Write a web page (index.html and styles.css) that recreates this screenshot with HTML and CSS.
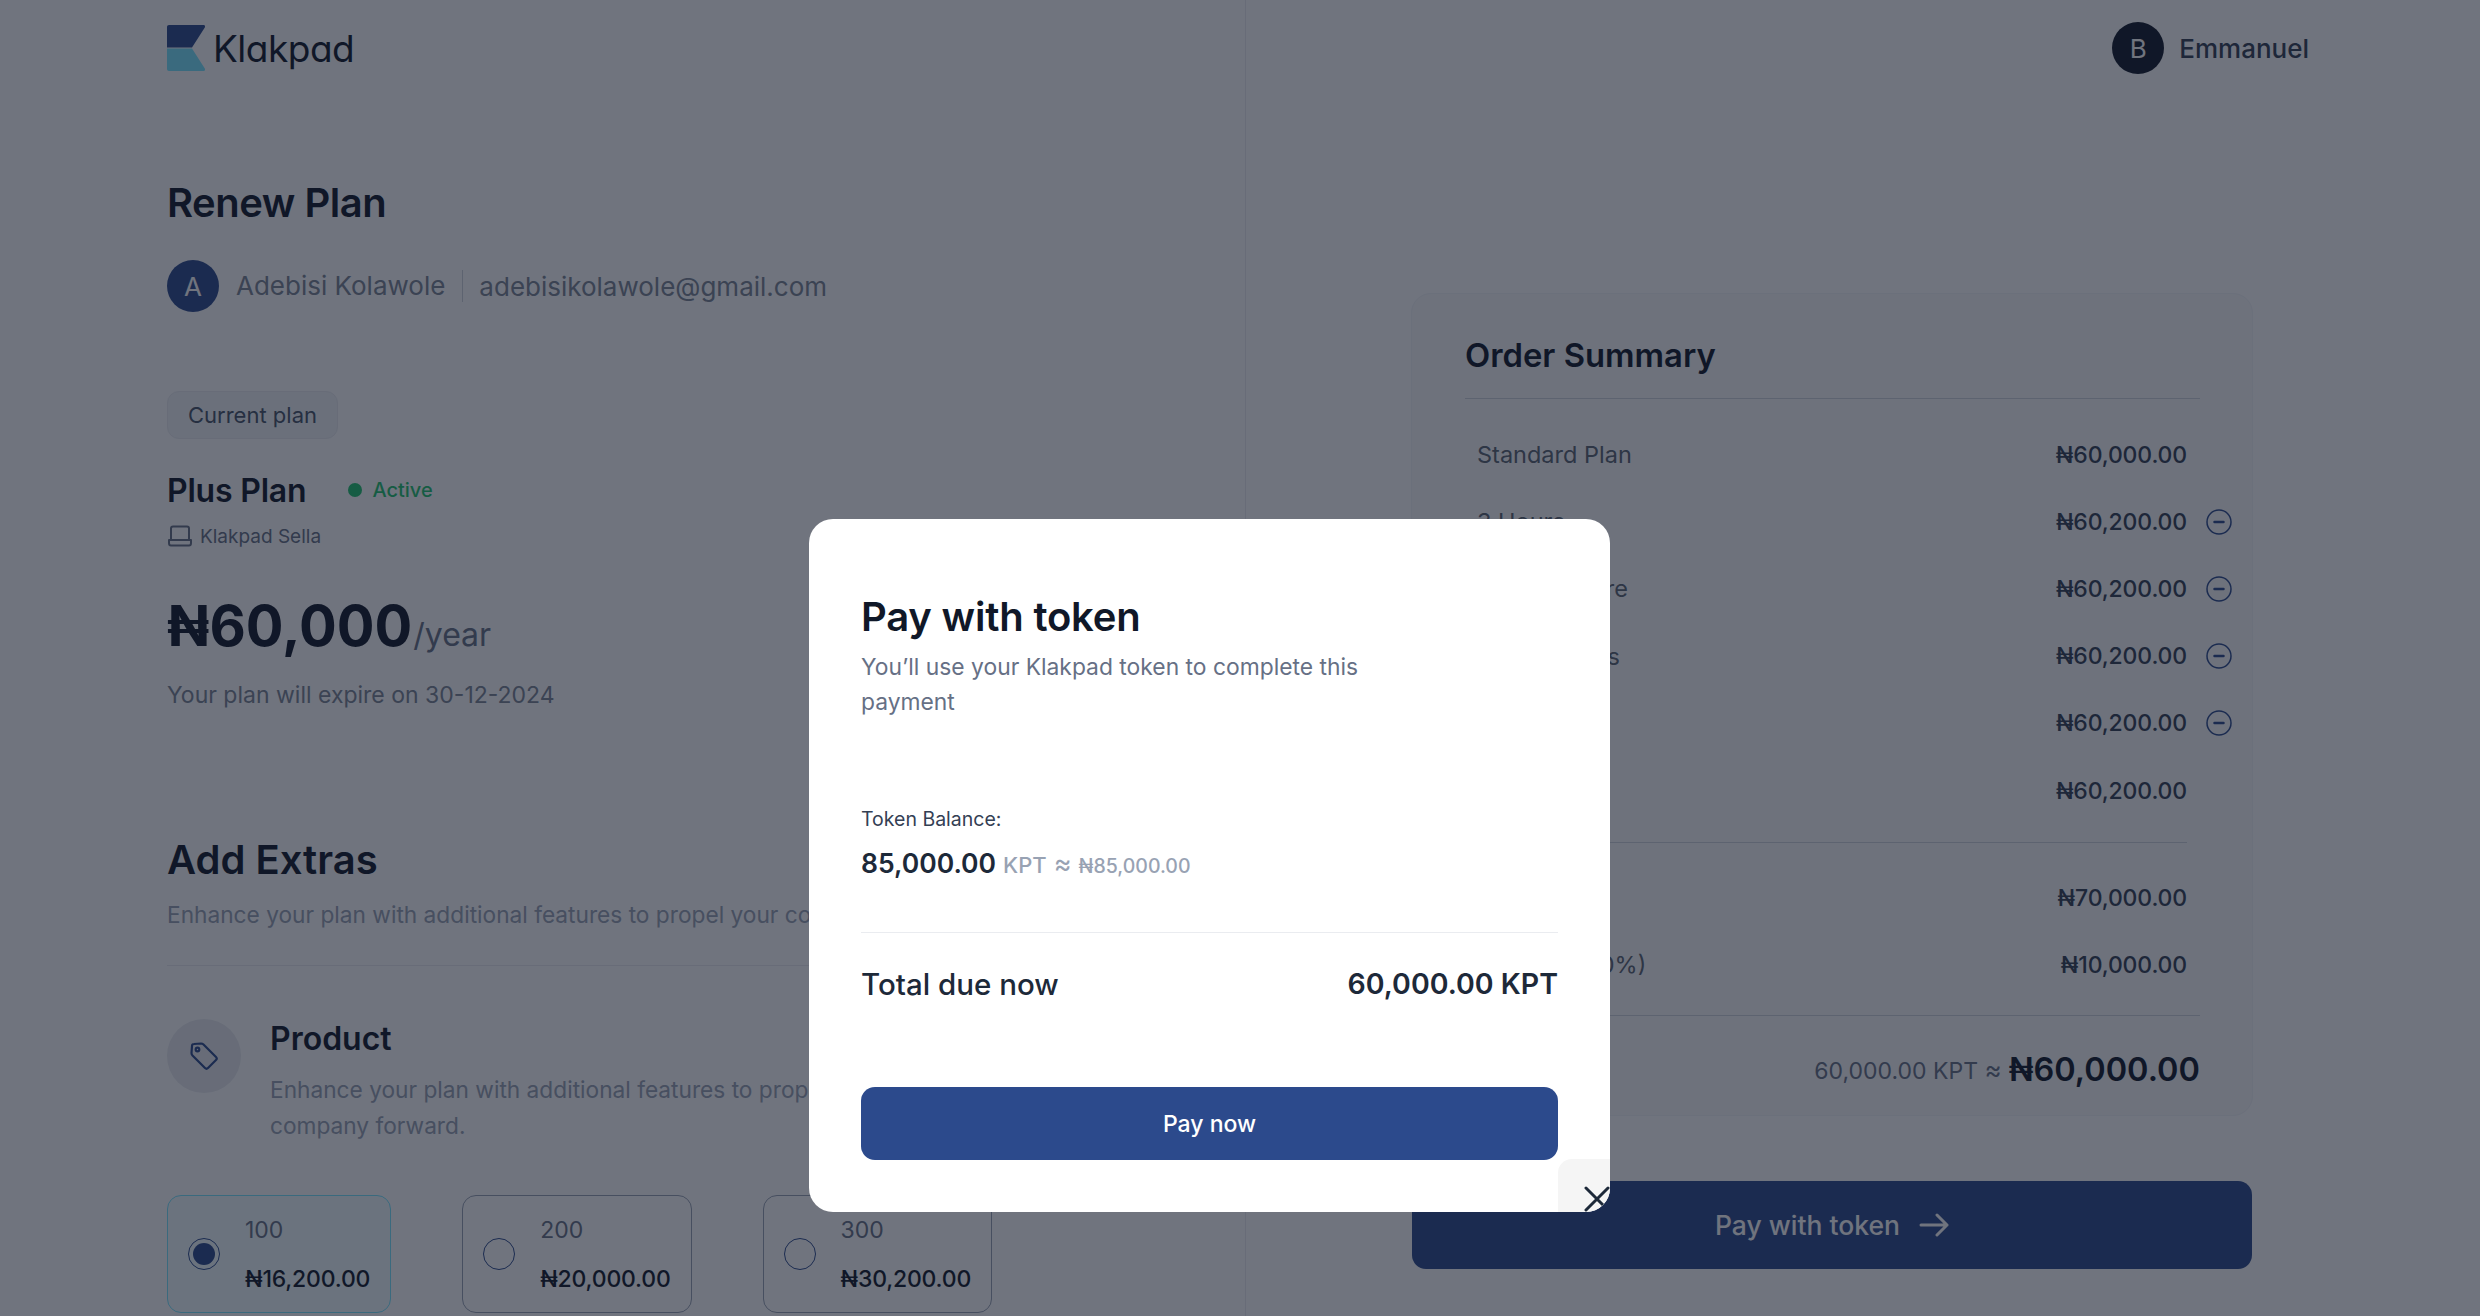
FILE: index.html
```html
<!DOCTYPE html>
<html lang="en">
<head>
  <meta charset="UTF-8">
  <meta name="viewport" content="width=device-width, initial-scale=1.0">
  <title>Renew Plan - Klakpad</title>
  <link rel="stylesheet" href="styles.css">
</head>
<body>
  <div class="page">
    <main class="left">
      <div class="logo">
        <svg class="logo-mark" width="38" height="46" viewBox="0 0 38 46">
          <path d="M2 0H36.5C38 0 38.6 1.2 37.8 2.4L25 22.6H0V2C0 .8 .8 0 2 0Z" fill="#2c4a8c"/>
          <path d="M0 23.4H25L37.8 43.6C38.6 44.8 38 46 36.5 46H2C.8 46 0 45.2 0 44Z" fill="#79e6ff"/>
        </svg>
        <span class="logo-text">Klakpad</span>
      </div>

      <h1 class="title">Renew Plan</h1>
      <div class="customer">
        <span class="avatar avatar-blue">A</span>
        <span class="customer-name">Adebisi Kolawole</span>
        <span class="customer-email">adebisikolawole@gmail.com</span>
      </div>

      <span class="chip">Current plan</span>
      <div class="plan-row">
        <h2 class="plan-name">Plus Plan</h2>
        <span class="status"><i class="status-dot"></i>Active</span>
      </div>
      <div class="plan-product">
        <svg width="26" height="22" viewBox="0 0 26 22" fill="none" stroke="#667085" stroke-width="2" stroke-linejoin="round">
          <path d="M4 15V3.5C4 2.2 4.8 1.5 6 1.5H20C21.2 1.5 22 2.2 22 3.5V15"/>
          <path d="M2 15H24V18C24 19.4 23.2 20.500 22 20.500H4C2.800 20.500 2 19.400 2 18Z"/>
        </svg>
        Klakpad Sella
      </div>
      <div class="price"><span class="price-value">₦60,000</span><span class="price-unit">/year</span></div>
      <p class="expiry">Your plan will expire on 30-12-2024</p>

      <section class="extras">
        <h2 class="extras-title">Add Extras</h2>
        <p class="extras-sub">Enhance your plan with additional features to propel your company forward.</p>

        <div class="extra">
          <span class="extra-icon">
            <svg width="30" height="30" viewBox="0 0 30 30" fill="none" stroke="#2c4a8c" stroke-width="2.200" stroke-linejoin="round">
              <path d="M3 5Q3 3 5 3L12 2.500Q13.500 2.500 14.500 3.500L27 16Q28.500 17.500 27 19L19 27Q17.500 28.500 16 27L3.500 14.500Q2.500 13.500 2.500 12Z"/>
              <circle cx="8.500" cy="8.500" r="1.800"/>
            </svg>
          </span>
          <div>
            <h3 class="extra-name">Product</h3>
            <p class="extra-desc">Enhance your plan with additional features to propel your<br>company forward.</p>
          </div>
        </div>

        <div class="options">
          <div class="option option-selected">
            <span class="radio radio-on"></span>
            <div><div class="option-qty">100</div><div class="option-price">₦16,200.00</div></div>
          </div>
          <div class="option">
            <span class="radio"></span>
            <div><div class="option-qty">200</div><div class="option-price">₦20,000.00</div></div>
          </div>
          <div class="option">
            <span class="radio"></span>
            <div><div class="option-qty">300</div><div class="option-price">₦30,200.00</div></div>
          </div>
        </div>
      </section>
    </main>

    <aside class="right">
      <div class="account">
        <span class="avatar avatar-dark">B</span>
        <span class="account-name">Emmanuel</span>
      </div>

      <div class="summary">
        <h2 class="summary-title">Order Summary</h2>
        <div class="rows">
          <div class="row"><span class="row-label">Standard Plan</span><span class="row-amount">₦60,000.00</span><span class="row-action"></span></div>
          <div class="row"><span class="row-label">3 Hours</span><span class="row-amount">₦60,200.00</span><svg class="row-action" viewBox="0 0 26 26"><circle cx="13" cy="13" r="12"/><path d="M8.500 13H17.500"/></svg></div>
          <div class="row"><span class="row-label">Custom Store</span><span class="row-amount">₦60,200.00</span><svg class="row-action" viewBox="0 0 26 26"><circle cx="13" cy="13" r="12"/><path d="M8.500 13H17.500"/></svg></div>
          <div class="row"><span class="row-label">Extra Credits</span><span class="row-amount">₦60,200.00</span><svg class="row-action" viewBox="0 0 26 26"><circle cx="13" cy="13" r="12"/><path d="M8.500 13H17.500"/></svg></div>
          <div class="row"><span class="row-label">Staff</span><span class="row-amount">₦60,200.00</span><svg class="row-action" viewBox="0 0 26 26"><circle cx="13" cy="13" r="12"/><path d="M8.500 13H17.500"/></svg></div>
          <div class="row"><span class="row-label">Domain</span><span class="row-amount">₦60,200.00</span><span class="row-action"></span></div>
        </div>
        <div class="rows rows-totals">
          <div class="row"><span class="row-label">Subtotal</span><span class="row-amount">₦70,000.00</span><span class="row-action"></span></div>
          <div class="row"><span class="row-label">Discount (10%)</span><span class="row-amount">₦10,000.00</span><span class="row-action"></span></div>
        </div>
        <div class="total">
          <span class="total-label">Total</span>
          <span class="total-kpt">60,000.00 KPT <span class="total-approx">≈</span></span>
          <span class="total-value">₦60,000.00</span>
        </div>
      </div>

      <button class="pay-token">
        Pay with token
        <svg width="30" height="26" viewBox="0 0 30 26" fill="none" stroke="#fff" stroke-width="3" stroke-linecap="round" stroke-linejoin="round"><path d="M2 13H28M18 3 28 13 18 23"/></svg>
      </button>
    </aside>
  </div>

  <div class="overlay"></div>

  <div class="modal">
    <h2 class="modal-title">Pay with token</h2>
    <p class="modal-sub">You’ll use your Klakpad token to complete this payment</p>

    <div class="balance-label">Token Balance:</div>
    <div class="balance">
      <span class="balance-value">85,000.00</span>
      <span class="balance-kpt">KPT</span>
      <span class="balance-approx">≈</span>
      <span class="balance-naira">₦85,000.00</span>
    </div>

    <div class="due">
      <span class="due-label">Total due now</span>
      <span class="due-value">60,000.00 KPT</span>
    </div>

    <button class="pay-now">Pay now</button>

    <button class="close" aria-label="Close">
      <svg width="26" height="26" viewBox="0 0 26 26" fill="none" stroke="#1d2939" stroke-width="3" stroke-linecap="round"><path d="M2 2 24 24M24 2 2 24"/></svg>
    </button>
  </div>
</body>
</html>
```

FILE: styles.css
```css
* {
  box-sizing: border-box;
}

html, body {
  margin: 0;
  height: 1316px;
  overflow: hidden;
}

body {
  font-family: Inter, "Noto Sans", sans-serif;
  color: #101828;
  background: #fff;
}

h1, h2, h3, p {
  margin: 0;
}

.page {
  display: grid;
  grid-template-columns: 1246px 1fr;
  height: 1316px;
}

/* Left column */
.left {
  border-right: 1px solid #eaecf0;
  padding: 25px 0 0 167px;
  overflow: hidden;
}

.logo {
  display: flex;
  align-items: center;
  gap: 8px;
  height: 46px;
}

.logo-text {
  font-size: 37px;
  font-feature-settings: "cv11";
  letter-spacing: -0.5px;
  color: #101828;
}

.title {
  margin-top: 108px;
  font-size: 40px;
  line-height: 48px;
  font-weight: 600;
  letter-spacing: -0.5px;
}

.customer {
  display: flex;
  align-items: center;
  margin-top: 33px;
  font-size: 26px;
  color: #7a8494;
}

.avatar {
  display: flex;
  align-items: center;
  justify-content: center;
  width: 52px;
  height: 52px;
  border-radius: 50%;
  color: #fff;
  font-size: 26px;
}

.avatar-blue {
  background: #2c4a8c;
}

.avatar-dark {
  background: #101828;
}

.customer-name {
  margin-left: 17px;
  padding-right: 17px;
  border-right: 1px solid #d0d5dd;
  line-height: 32px;
}

.customer-email {
  margin-left: 16px;
}

.chip {
  display: inline-block;
  margin-top: 79px;
  height: 48px;
  padding: 0 20px;
  line-height: 46px;
  font-size: 22px;
  color: #475467;
  background: #f2f4f7;
  border: 1px solid #eaecf0;
  border-radius: 12px;
}

.plan-row {
  display: flex;
  align-items: center;
  gap: 42px;
  margin-top: 31px;
  height: 40px;
}

.plan-name {
  font-size: 32px;
  font-weight: 600;
  letter-spacing: -0.2px;
}

.status {
  display: flex;
  align-items: center;
  gap: 10px;
  font-size: 20px;
  font-weight: 500;
  color: #1fc46e;
}

.status-dot {
  width: 14px;
  height: 14px;
  border-radius: 50%;
  background: #1fc46e;
}

.plan-product {
  display: flex;
  align-items: center;
  gap: 7px;
  margin-top: 14px;
  height: 24px;
  font-size: 19px;
  color: #667085;
}

.price {
  margin-top: 40px;
  height: 76px;
  line-height: 76px;
}

.price-value {
  font-size: 56px;
  font-weight: 700;
}

.price-unit {
  margin-left: 1px;
  font-size: 32px;
  color: #667085;
}

.expiry {
  margin-top: 15px;
  font-size: 23px;
  line-height: 32px;
  color: #7a8494;
}

.extras-title {
  margin-top: 122px;
  font-size: 40px;
  line-height: 54px;
  font-weight: 600;
}

.extras-sub {
  margin-top: 12px;
  padding-bottom: 34px;
  border-bottom: 1px solid #eaecf0;
  font-size: 22.700px;
  line-height: 32px;
  color: #98a2b3;
  white-space: nowrap;
}

.extra {
  display: flex;
  gap: 29px;
  margin-top: 53px;
}

.extra-icon {
  display: flex;
  align-items: center;
  justify-content: center;
  flex: none;
  width: 74px;
  height: 74px;
  border-radius: 50%;
  background: #eaecf0;
}

.extra-name {
  font-size: 32px;
  line-height: 40px;
  font-weight: 600;
}

.extra-desc {
  margin-top: 13px;
  font-size: 22.700px;
  line-height: 36px;
  color: #98a2b3;
  white-space: nowrap;
}

.options {
  display: flex;
  gap: 71px;
  margin-top: 51px;
}

.option {
  display: flex;
  align-items: center;
  gap: 25px;
  height: 118px;
  padding: 0 20px;
  border: 1.500px solid #98a2b3;
  border-radius: 14px;
}

.option-selected {
  background: #f2fdff;
  border-color: #79e6ff;
}

.radio {
  flex: none;
  width: 32px;
  height: 32px;
  border: 1.500px solid #2c4a8c;
  border-radius: 50%;
}

.radio-on {
  position: relative;
}

.radio-on::after {
  content: "";
  position: absolute;
  inset: 4px;
  border-radius: 50%;
  background: #2c4a8c;
}

.option-qty {
  font-size: 23px;
  line-height: 30px;
  color: #667085;
}

.option-price {
  margin-top: 19px;
  font-size: 23px;
  line-height: 30px;
  font-weight: 500;
  letter-spacing: -0.2px;
  color: #101828;
}

/* Right column */
.right {
  padding: 22px 171px 0 165px;
}

.account {
  display: flex;
  align-items: center;
  justify-content: flex-end;
  gap: 15px;
}

.account-name {
  font-size: 26px;
  font-weight: 500;
  color: #344054;
}

.summary {
  width: 842px;
  height: 823px;
  margin-top: 219px;
  padding: 41px 52px 0 53px;
  background: #f9fafb;
  border: 1px solid #f2f4f7;
  border-radius: 20px;
}

.summary-title {
  padding-bottom: 23px;
  border-bottom: 1px solid #d0d5dd;
  font-size: 32.800px;
  line-height: 40px;
  font-weight: 600;
}

.rows {
  margin: 22px -32px 0 0;
}

.rows-totals {
  padding-top: 22px;
  margin-top: 18px;
  position: relative;
}

.rows-totals::before {
  content: "";
  position: absolute;
  top: 0;
  left: 12px;
  right: 45px;
  border-top: 1px solid #d0d5dd;
}

.row {
  display: flex;
  align-items: center;
  gap: 19px;
  height: 67.200px;
  padding-left: 12px;
  font-size: 23.500px;
}

.row-label {
  flex: 1;
  color: #5a6472;
}

.row-amount {
  font-size: 23px;
  font-weight: 500;
  letter-spacing: -0.15px;
  color: #344054;
}

.row-action {
  flex: none;
  width: 26px;
  height: 26px;
  fill: none;
  stroke: #2c4a8c;
  stroke-width: 1.500;
}

.row-action path {
  stroke-width: 2.500;
  stroke-linecap: round;
}

.total {
  display: flex;
  align-items: center;
  height: 108px;
  margin-top: 16px;
  border-top: 1px solid #d0d5dd;
  gap: 7px;
}

.total-label {
  flex: 1;
  font-size: 24px;
  font-weight: 600;
}

.total-kpt {
  font-size: 23px;
  color: #667085;
}

.total-approx {
  font-size: 26px;
}

.total-value {
  font-size: 32.500px;
  font-weight: 600;
}

.pay-token {
  display: flex;
  align-items: center;
  justify-content: center;
  gap: 19px;
  width: 840px;
  height: 88px;
  margin: 65px 0 0 1px;
  border: 0;
  border-radius: 14px;
  background: #2c4a8c;
  color: #fff;
  font-family: inherit;
  font-size: 26.500px;
  font-weight: 500;
}

/* Modal */
.overlay {
  position: fixed;
  inset: 0;
  background: rgba(16, 24, 40, 0.6);
}

.modal {
  position: fixed;
  left: 809px;
  top: 519px;
  width: 801px;
  height: 693px;
  padding: 72px 52px 0 52px;
  background: #fff;
  border-radius: 24px;
  overflow: hidden;
}

.modal-title {
  font-size: 40px;
  line-height: 52px;
  font-weight: 600;
  letter-spacing: -0.2px;
}

.modal-sub {
  width: 540px;
  margin-top: 7px;
  font-size: 22.850px;
  line-height: 35px;
  color: #667085;
}

.balance-label {
  margin-top: 85px;
  font-size: 19.500px;
  line-height: 28px;
  color: #344054;
}

.balance {
  display: flex;
  align-items: baseline;
  gap: 7px;
  margin-top: 11px;
  padding-bottom: 50px;
  border-bottom: 1px solid #eaecf0;
}

.balance-value {
  font-size: 26.500px;
  line-height: 38px;
  font-weight: 600;
  color: #1d2939;
}

.balance-kpt {
  font-size: 22px;
  font-weight: 500;
  color: #98a2b3;
}

.balance-approx {
  font-size: 27px;
  color: #98a2b3;
}

.balance-naira {
  font-size: 19.500px;
  font-weight: 500;
  color: #98a2b3;
}

.due {
  display: flex;
  justify-content: space-between;
  align-items: center;
  margin-top: 31px;
  line-height: 40px;
}

.due-label {
  font-size: 29.500px;
  font-weight: 500;
  color: #1d2939;
}

.due-value {
  font-size: 28.500px;
  font-weight: 600;
  color: #1d2939;
}

.pay-now {
  display: block;
  width: 100%;
  height: 73px;
  margin-top: 83px;
  border: 0;
  border-radius: 14px;
  background: #2c4a8c;
  color: #fff;
  font-family: inherit;
  font-size: 23px;
  font-weight: 500;
}

.close {
  position: absolute;
  right: 0;
  bottom: 0;
  display: flex;
  align-items: flex-start;
  justify-content: flex-end;
  width: 52px;
  height: 53px;
  padding: 27px 0 0;
  border: 0;
  border-top-left-radius: 14px;
  background: #f5f5f5;
}
```
